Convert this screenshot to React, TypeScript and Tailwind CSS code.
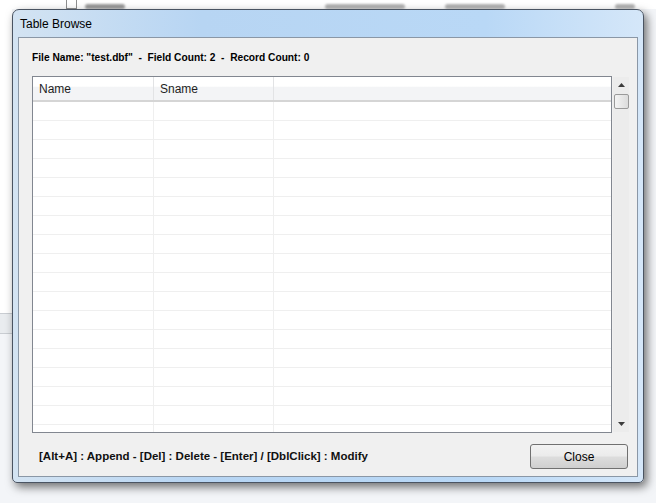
import React from 'react'

const rows = Array.from({ length: 18 })

function ScrollBar() {
  return (
    <div className="mt-[1px] flex h-[355px] w-[16px] shrink-0 flex-col items-center bg-[#ececec]">
      <div className="flex h-[16px] w-full items-center justify-center">
        <svg width="7" height="4" viewBox="0 0 7 4">
          <path d="M0 4 L3.5 0 L7 4 Z" fill="#3c3c3c" />
        </svg>
      </div>
      <div className="mt-[1px] h-[15px] w-[15px] rounded-[2px] border border-[#9a9a9a] bg-gradient-to-r from-[#f4f4f4] to-[#dcdcdc]" />
      <div className="flex-1" />
      <div className="flex h-[16px] w-full items-center justify-center">
        <svg width="7" height="4" viewBox="0 0 7 4">
          <path d="M0 0 L3.5 4 L7 0 Z" fill="#3c3c3c" />
        </svg>
      </div>
    </div>
  )
}

function Grid() {
  return (
    <div className="h-[357px] w-[580px] shrink-0 overflow-hidden border border-[#828790] bg-white">
      <div className="flex h-[25px] border-b-2 border-[#d5d5d5] bg-[linear-gradient(to_bottom,#ffffff_0%,#ffffff_40%,#f3f4f6_45%,#f3f4f6_100%)] text-[12px] text-[#1e1e1e]">
        <div className="flex w-[121px] items-center border-r border-[#e2e3e5] pl-[6px] pt-[1px]">Name</div>
        <div className="flex w-[120px] items-center border-r border-[#e2e3e5] pl-[6px] pt-[1px]">Sname</div>
        <div className="flex-1" />
      </div>
      <div>
        {rows.map((_, i) => (
          <div key={i} className="flex h-[19px] border-b border-[#efefef]">
            <div className="w-[121px] border-r border-[#efefef]" />
            <div className="w-[120px] border-r border-[#efefef]" />
            <div className="flex-1" />
          </div>
        ))}
      </div>
    </div>
  )
}

export default function App() {
  return (
    <div className="relative h-[503px] w-[656px] overflow-hidden bg-[#f3f5f8] font-['Liberation_Sans',Arial,sans-serif]">
      {/* explorer behind the dialog */}
      <div className="flex h-[9px] items-end bg-white">
        <div className="ml-[66px] h-[10px] w-[11px] border border-[#8e8f8f] bg-white" />
        <div className="ml-[8px] h-[5px] w-[40px] rounded-sm bg-[#9a9a9a] blur-[1px]" />
        <div className="ml-[200px] h-[5px] w-[80px] rounded-sm bg-[#b3b3b3] blur-[1px]" />
        <div className="ml-[40px] h-[5px] w-[60px] rounded-sm bg-[#b3b3b3] blur-[1px]" />
        <div className="ml-[110px] h-[5px] w-[20px] rounded-sm bg-[#b3b3b3] blur-[1px]" />
      </div>
      <div className="h-[304px] w-[12px] bg-white" />
      <div className="h-[1px] w-[12px] bg-[#c9cdd2]" />
      <div className="h-[19px] w-[12px] bg-[#e9ecef]" />
      <div className="h-[1px] w-[12px] bg-[#c9cdd2]" />

      {/* dialog window */}
      <div className="absolute left-[12px] top-[9px] flex h-[474px] w-[632px] flex-col rounded-t-[7px] rounded-b-[5px] border border-[#4a5462] bg-[linear-gradient(to_right,#d3e3f2_0%,#b7d5f3_30%,#b9d8f6_75%,#d5e7f9_100%)] px-[5px] pb-[5px] shadow-[3px_4px_10px_rgba(0,0,0,0.55)]">
        <div className="flex h-[27px] shrink-0 items-center pl-[2px] text-[12px] text-black">Table Browse</div>
        <div className="flex flex-1 flex-col border border-[#8a97a6] bg-[#f0f0f0] pl-[13px] pr-[9px] pt-[13px]">
          <div className="h-[14px] whitespace-pre text-[10.2px] font-bold leading-[14px] text-black">
            {'File Name: "test.dbf"  -  Field Count: 2  -  Record Count: 0'}
          </div>
          <div className="mt-[11px] flex gap-[1px]">
            <Grid />
            <ScrollBar />
          </div>
          <div className="mt-[11px] flex items-center justify-between pl-[7px]">
            <div className="text-[11.5px] font-bold text-[#111]">
              [Alt+A] : Append - [Del] : Delete - [Enter] / [DblClick] : Modify
            </div>
            <button
              type="button"
              className="flex h-[25px] w-[98px] items-center justify-center rounded-[3px] border border-[#707070] bg-[linear-gradient(to_bottom,#f2f2f2_0%,#ebebeb_48%,#dddddd_52%,#cfcfcf_100%)] text-[12px] text-black"
            >
              Close
            </button>
          </div>
        </div>
      </div>
    </div>
  )
}
